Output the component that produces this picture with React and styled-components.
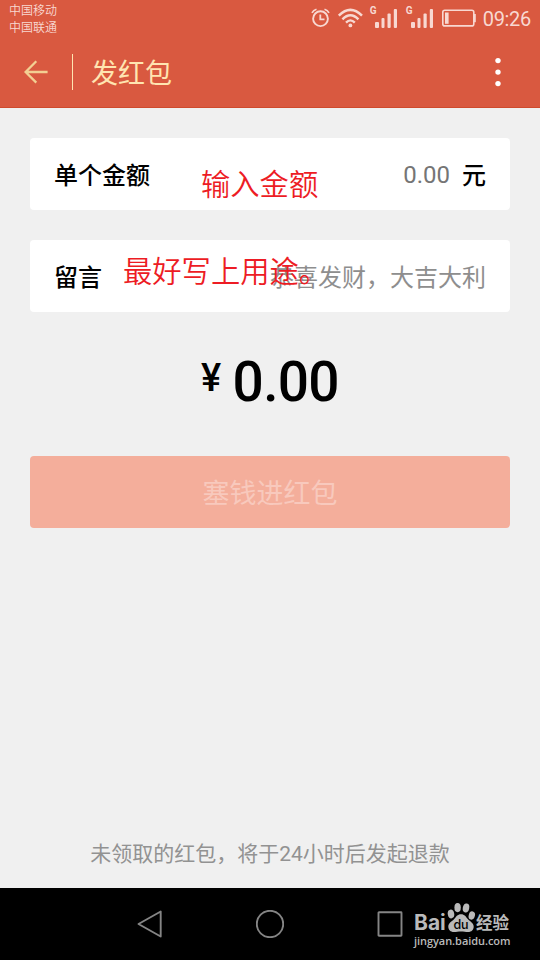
import React from "react";
import styled, { createGlobalStyle } from "styled-components";

const GlobalStyle = createGlobalStyle`
  * {
    box-sizing: border-box;
  }
  body {
    margin: 0;
    background: #f0f0f0;
    font-family: Roboto, "Noto Sans CJK SC", sans-serif;
  }
  h1, p {
    margin: 0;
    font-weight: 400;
  }
  svg {
    display: block;
    flex-shrink: 0;
  }
`;

const AlarmIcon = () => (
  <svg width="20" height="20" viewBox="0 0 20 20" fill="none" stroke="currentColor">
    <circle cx="10.5" cy="10.7" r="7.4" strokeWidth="1.9" />
    <path d="M10.3 6.6v4.8h4.2" strokeWidth="1.8" />
    <path d="M2 4.8Q3.4 2.2 6.5 1.3M19 4.8Q17.6 2.2 14.5 1.3" strokeWidth="1.7" />
  </svg>
);

const WifiIcon = () => (
  <svg width="26" height="20" viewBox="0 0 26 20" fill="none" stroke="currentColor">
    <path d="M1.8 7.6Q13.4 -3.8 25 7.6" strokeWidth="2.5" />
    <path d="M5.4 11.3Q13.4 3.2 21.4 11.3" strokeWidth="2.5" />
    <path d="M9 14.6Q13.4 10 17.8 14.6" strokeWidth="2.3" />
    <circle cx="13.4" cy="17.4" r="1.9" fill="currentColor" stroke="none" />
  </svg>
);

const SignalIcon = () => (
  <svg width="22" height="19" viewBox="0 0 22 19" fill="currentColor">
    <rect x="0" y="13" width="4" height="6" rx="1" />
    <rect x="6.5" y="9" width="3" height="10" rx="1" />
    <rect x="12.5" y="4.5" width="3.2" height="14.5" rx="1" />
    <rect x="18.8" y="0" width="3.2" height="19" rx="1" />
  </svg>
);

const BatteryIcon = () => (
  <svg width="34" height="18" viewBox="0 0 34 18" fill="none" stroke="currentColor">
    <rect x="0.8" y="1.3" width="31" height="15.6" rx="2" strokeWidth="1.6" />
    <rect x="3" y="3.5" width="3.6" height="11.3" fill="currentColor" stroke="none" />
    <path d="M32.8 5v8.2" strokeWidth="2" />
  </svg>
);

const BackIcon = () => (
  <svg width="24" height="24" viewBox="0 0 24 24" fill="none" stroke="currentColor" strokeWidth="2.3">
    <path d="M23.6 12H2M12.3 1.2L1.6 12l10.7 10.6" />
  </svg>
);

const MoreIcon = () => (
  <svg width="6" height="30" viewBox="0 0 6 30" fill="#fff">
    <circle cx="3" cy="3.6" r="2.7" />
    <circle cx="3" cy="15.1" r="2.7" />
    <circle cx="3" cy="26.6" r="2.7" />
  </svg>
);

const PawIcon = () => (
  <svg width="29" height="31" viewBox="0 0 29 31" fill="#bababa">
    <ellipse cx="4" cy="12" rx="3.2" ry="4.4" transform="rotate(-12 4 12)" />
    <ellipse cx="10.6" cy="5.6" rx="3.2" ry="4.6" />
    <ellipse cx="19" cy="6" rx="3.2" ry="4.5" transform="rotate(12 19 6)" />
    <ellipse cx="24.8" cy="13.5" rx="3.1" ry="4.2" transform="rotate(16 24.8 13.5)" />
    <path d="M14 12.3c3.6 0 5 2.7 6.8 4.8 2.3 2.6 5.9 4 5.9 7.4 0 3.4-2.3 5.5-5.5 5.5-2.6 0-4.5-.6-7.2-.6s-4.6.6-7.2.6c-3.2 0-5.5-2.1-5.5-5.5 0-3.5 3.6-4.8 5.9-7.4 1.8-2.1 3.2-4.8 6.8-4.8z" />
    <text x="14" y="27.3" textAnchor="middle" fontFamily="Inter, sans-serif" fontSize="12.5" fontWeight="500" fill="#000">
      du
    </text>
  </svg>
);

const App = () => {
  return (
    <Screen>
      <GlobalStyle />
      <Header>
        <StatusBar>
          <Carriers>
            <span>中国移动</span>
            <span>中国联通</span>
          </Carriers>
          <StatusIcons>
            <AlarmIcon />
            <WifiIcon />
            {["sim1", "sim2"].map((sim) => (
              <Signal key={sim}>
                <span>G</span>
                <SignalIcon />
              </Signal>
            ))}
            <BatteryIcon />
            <time>09:26</time>
          </StatusIcons>
        </StatusBar>
        <TitleBar>
          <BackIcon />
          <Divider />
          <h1>发红包</h1>
          <MoreIcon />
        </TitleBar>
      </Header>
      <Main>
        <Field>
          <Label>单个金额</Label>
          <Amount>0.00</Amount>
          <Unit>元</Unit>
          <Note $left={171} $top={26}>
            输入金额
          </Note>
        </Field>
        <Field>
          <Label>留言</Label>
          <Message>恭喜发财，大吉大利</Message>
          <Note $left={93} $top={11}>
            最好写上用途。
          </Note>
        </Field>
        <Total>
          <Currency>¥</Currency>
          <span>0.00</span>
        </Total>
        <SubmitButton disabled>塞钱进红包</SubmitButton>
        <Hint>未领取的红包，将于24小时后发起退款</Hint>
      </Main>
      <NavBar>
        <svg width="26" height="28" viewBox="0 0 26 28">
          <path d="M23.7 1.5v25L1.5 14z" />
        </svg>
        <svg width="28" height="28" viewBox="0 0 28 28">
          <circle cx="14" cy="14" r="13.2" />
        </svg>
        <svg width="26" height="26" viewBox="0 0 26 26">
          <rect x="1.5" y="1.3" width="23" height="23.5" rx="0.5" />
        </svg>
        <Watermark>
          <Brand>
            <Latin>Bai</Latin>
            <PawIcon />
            <Chinese>经验</Chinese>
          </Brand>
          <Site>jingyan.baidu.com</Site>
        </Watermark>
      </NavBar>
    </Screen>
  );
};

const Screen = styled.div`
  display: flex;
  flex-direction: column;
  width: 540px;
  height: 960px;
  overflow: hidden;
  background: #f0f0f0;
`;

const Header = styled.header`
  height: 108px;
  background: #d95940;
  border-bottom: 1px solid #cf4a2d;
`;

const StatusBar = styled.div`
  display: flex;
  justify-content: space-between;
  height: 36px;
  padding: 2px 9px 0 9px;
  color: #f8d8d1;
`;

const Carriers = styled.div`
  display: flex;
  flex-direction: column;
  padding-top: 1px;
  font-size: 12px;
  font-weight: 350;
  line-height: 17px;
`;

const StatusIcons = styled.div`
  display: flex;
  align-items: center;
  height: 32px;
  time {
    margin-left: 7px;
    padding-top: 1px;
    font-size: 20px;
    line-height: 32px;
    letter-spacing: -0.3px;
  }
  svg + svg {
    margin-left: 7px;
  }
`;

const Signal = styled.div`
  display: flex;
  margin-left: 7px;
  span {
    width: 5px;
    margin-top: -7px;
    font-size: 10px;
    font-weight: 700;
    line-height: 17px;
  }
  & + svg {
    margin-left: 9px;
  }
  & + & {
    margin-left: 9px;
  }
`;

const TitleBar = styled.div`
  display: flex;
  align-items: center;
  height: 72px;
  padding: 0 39px 0 24px;
  color: #f3cf92;
  h1 {
    flex: 1;
    margin-left: 18px;
    padding-top: 4px;
    font-size: 27px;
    line-height: 72px;
    color: #ffe5b1;
  }
`;

const Divider = styled.span`
  width: 1px;
  height: 36px;
  margin-left: 24px;
  background: #ffe5b1;
`;

const Main = styled.main`
  display: flex;
  flex-direction: column;
  height: 780px;
  padding: 30px 30px 0;
`;

const Field = styled.div`
  position: relative;
  display: flex;
  height: 72px;
  margin-bottom: 30px;
  padding: 2px 24px 0;
  border-radius: 4px;
  background: #fff;
  font-size: 24px;
  line-height: 72px;
`;

const Label = styled.span`
  flex: 1;
  font-weight: 500;
  color: #000;
`;

const Amount = styled.span`
  margin-top: -1px;
  color: #757575;
`;

const Message = styled.span`
  color: #8e8e8e;
`;

const Unit = styled.span`
  margin-left: 12px;
  font-weight: 500;
`;

/* red remark laid over a field */
const Note = styled.span`
  position: absolute;
  left: ${(props) => props.$left}px;
  top: ${(props) => props.$top}px;
  font-size: 29.3px;
  font-weight: 350;
  line-height: 42px;
  white-space: nowrap;
  color: #ed1c24;
`;

const Total = styled.div`
  display: flex;
  justify-content: center;
  height: 114px;
  font-size: 55px;
  font-weight: 500;
  line-height: 81px;
  letter-spacing: -0.7px;
  color: #000;
`;

const Currency = styled.span`
  margin-right: 12px;
  font-size: 38px;
  line-height: 73px;
`;

const SubmitButton = styled.button`
  height: 72px;
  padding: 4px 0 0;
  border: 0;
  border-radius: 4px;
  background: #f4ae9b;
  font-family: inherit;
  font-size: 27px;
  line-height: 68px;
  color: #f8c9bd;
`;

const Hint = styled.p`
  margin-top: auto;
  padding-bottom: 19px;
  font-size: 21px;
  line-height: 30px;
  text-align: center;
  color: #929292;
`;

const NavBar = styled.nav`
  position: relative;
  display: flex;
  align-items: center;
  gap: 93px;
  height: 72px;
  padding-left: 137px;
  background: #000;
  > svg {
    fill: none;
    stroke: #858585;
    stroke-width: 1.9;
    stroke-linejoin: round;
  }
`;

const Watermark = styled.div`
  position: absolute;
  left: 414px;
  top: 14px;
  color: #bababa;
`;

const Brand = styled.div`
  display: flex;
  height: 31px;
`;

const Latin = styled.span`
  width: 33px;
  padding-top: 10px;
  font-family: Inter, sans-serif;
  font-size: 21px;
  font-weight: 700;
  line-height: 22px;
`;

const Chinese = styled.span`
  padding-top: 11px;
  font-size: 16.5px;
  font-weight: 700;
  line-height: 22px;
`;

const Site = styled.div`
  font-family: "Open Sans", sans-serif;
  font-size: 11px;
  font-weight: 600;
  line-height: 15px;
  letter-spacing: -0.05px;
`;

export default App;
